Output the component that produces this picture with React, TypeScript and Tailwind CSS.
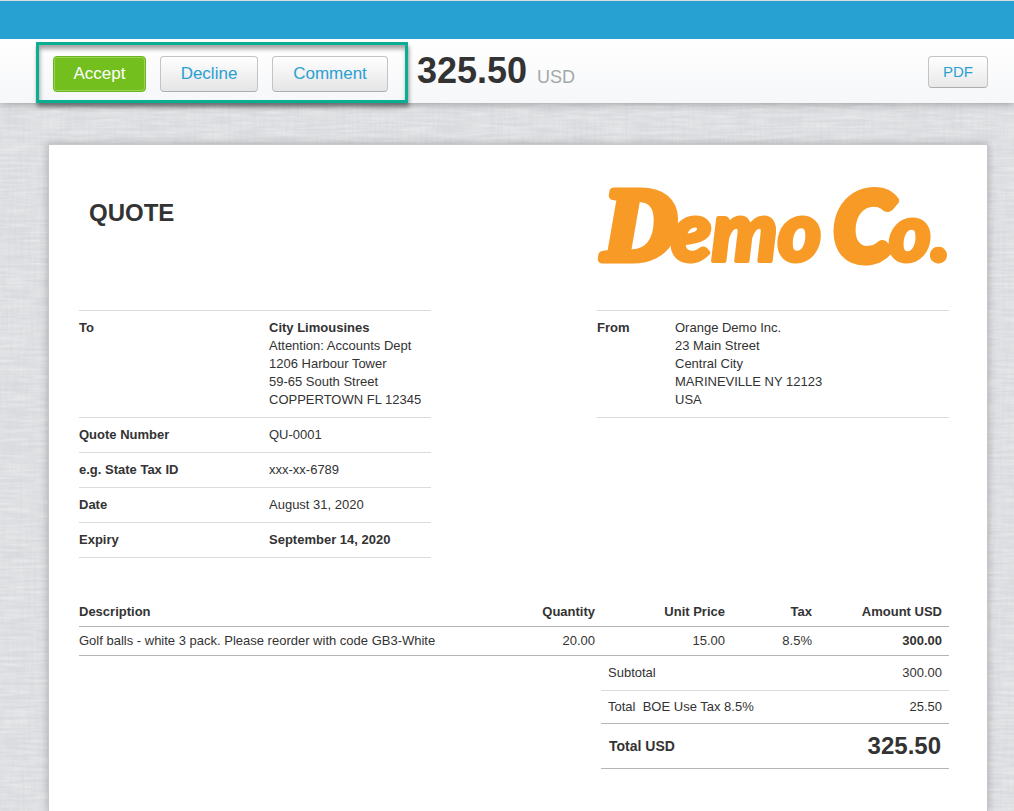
import type { ReactNode } from "react";

function LinenTexture() {
  return (
    <svg className="absolute inset-0 h-full w-full" aria-hidden="true">
      <defs>
        <filter id="weft" x="0" y="0" width="100%" height="100%">
          <feTurbulence type="fractalNoise" baseFrequency="0.03 0.35" numOctaves={2} seed={4} />
          <feColorMatrix values="0 0 0 0 1  0 0 0 0 1  0 0 0 0 1  0.7 0 0 0 -0.22" />
        </filter>
        <filter id="warp" x="0" y="0" width="100%" height="100%">
          <feTurbulence type="fractalNoise" baseFrequency="0.35 0.03" numOctaves={2} seed={9} />
          <feColorMatrix values="0 0 0 0 0.6  0 0 0 0 0.61  0 0 0 0 0.63  0.5 0 0 0 -0.2" />
        </filter>
      </defs>
      <rect width="100%" height="100%" filter="url(#weft)" />
      <rect width="100%" height="100%" filter="url(#warp)" />
    </svg>
  );
}

function Logo() {
  return (
    <svg className="h-[90px] w-[352px] overflow-visible" viewBox="0 0 352 90" role="img" aria-label="Demo Co.">
      <g
        className="fill-[#f89a26] stroke-[#f89a26] font-['Lato','Liberation_Sans',sans-serif] font-black italic"
        strokeLinejoin="round"
        strokeWidth="4"
      >
        <text
          x="6"
          y="78"
          fontSize="101"
          strokeWidth="9"
          className="font-['Liberation_Serif',serif] font-bold"
        >
          D
        </text>
        <text x="74" y="80" fontSize="83">emo</text>
        <text x="237" y="80" fontSize="95" strokeWidth="8">C</text>
        <text x="292" y="80" fontSize="80">o.</text>
      </g>
    </svg>
  );
}

const secondary =
  "h-9 rounded border border-[#c3c4c6] border-b-[#acaeb0] bg-linear-to-b from-white to-[#e5e5e5] text-[17px] text-[#2ba0d2]";

function DetailRow({ label, wide, children }: { label: string; wide?: boolean; children: ReactNode }) {
  return (
    <div className="flex border-b border-[#dbdbdb] py-2">
      <dt className={wide ? "w-[190px] shrink-0 font-bold" : "w-[78px] shrink-0 font-bold"}>{label}</dt>
      <dd>{children}</dd>
    </div>
  );
}

const items = [
  {
    description: "Golf balls - white 3 pack. Please reorder with code GB3-White",
    quantity: "20.00",
    price: "15.00",
    tax: "8.5%",
    amount: "300.00",
  },
];

export default function App() {
  return (
    <div className="relative flex min-h-screen flex-col bg-[#dadcdf] font-['Liberation_Sans',Arial,sans-serif] text-[13px] leading-[18px] text-[#333333]">
      <LinenTexture />

      <header className="relative">
        <div className="relative z-10 h-[39px] border-t border-[#d9dcde] bg-[#26a1d2]" />
        <div className="flex h-16 items-end bg-linear-to-b from-white to-[#f6f7f9] pr-[26px] pl-9 shadow-[0_1px_8px_rgba(0,0,0,0.3)]">
          <div className="flex h-[61px] gap-[14px] border-[3px] border-[#0aae92] pt-[11px] pr-[17px] pl-[14px] shadow-[1px_4px_4px_rgba(0,0,0,0.4),inset_1px_4px_4px_rgba(0,0,0,0.35)]">
            <button
              type="button"
              className="h-9 w-[93px] rounded border border-[#69b51c] bg-[#73bf1e] text-[17px] text-white shadow-[inset_0_0_0_1px_#9bd35b]"
            >
              Accept
            </button>
            <button type="button" className={`${secondary} w-[98px]`}>Decline</button>
            <button type="button" className={`${secondary} w-[116px]`}>Comment</button>
          </div>
          <p className="flex items-baseline gap-[10px] self-center pl-[9px]">
            <span className="text-4xl font-bold">325.50</span>
            <span className="text-lg text-[#a3a9a9]">USD</span>
          </p>
          <button
            type="button"
            className="mt-[17px] ml-auto h-8 w-[60px] self-start rounded border border-[#c3c4c6] border-b-[#acaeb0] bg-linear-to-b from-white to-[#e8e8e8] text-[15px] text-[#2ba0d2]"
          >
            PDF
          </button>
        </div>
      </header>

      <main className="relative mt-[41px] mr-[26px] ml-12 flex-1 border border-b-0 border-[#c6c7c9] bg-white pr-[38px] pb-10 pl-[30px] shadow-[0_0_8px_rgba(0,0,0,0.25)]">
        <div className="flex h-[165px] items-start justify-between">
          <h1 className="pt-[52px] pl-[10px] text-2xl leading-8 font-bold">QUOTE</h1>
          <div className="pt-9">
            <Logo />
          </div>
        </div>

        <div className="flex items-start justify-between">
          <dl className="w-[352px] border-t border-[#dbdbdb]">
            <DetailRow label="To" wide>
              <address className="not-italic">
                <strong>City Limousines</strong>
                <br />
                Attention: Accounts Dept
                <br />
                1206 Harbour Tower
                <br />
                59-65 South Street
                <br />
                COPPERTOWN FL 12345
              </address>
            </DetailRow>
            <DetailRow label="Quote Number" wide>QU-0001</DetailRow>
            <DetailRow label="e.g. State Tax ID" wide>xxx-xx-6789</DetailRow>
            <DetailRow label="Date" wide>August 31, 2020</DetailRow>
            <DetailRow label="Expiry" wide>
              <strong>September 14, 2020</strong>
            </DetailRow>
          </dl>
          <dl className="w-[352px] border-t border-[#dbdbdb]">
            <DetailRow label="From">
              <address className="not-italic">
                Orange Demo Inc.
                <br />
                23 Main Street
                <br />
                Central City
                <br />
                MARINEVILLE NY 12123
                <br />
                USA
              </address>
            </DetailRow>
          </dl>
        </div>

        <table className="mt-10 w-full table-fixed text-right">
          <thead>
            <tr className="border-b border-[#b3b4b8]">
              <th scope="col" className="py-[5px] text-left">Description</th>
              <th scope="col" className="w-[130px] py-[5px] pr-[7px]">Quantity</th>
              <th scope="col" className="w-[130px] py-[5px] pr-[7px]">Unit Price</th>
              <th scope="col" className="w-[87px] py-[5px] pr-[7px]">Tax</th>
              <th scope="col" className="w-[130px] py-[5px] pr-[7px]">Amount USD</th>
            </tr>
          </thead>
          <tbody>
            {items.map((item) => (
              <tr key={item.description} className="border-b border-[#b3b4b8]">
                <td className="py-[5px] text-left">{item.description}</td>
                <td className="py-[5px] pr-[7px]">{item.quantity}</td>
                <td className="py-[5px] pr-[7px]">{item.price}</td>
                <td className="py-[5px] pr-[7px]">{item.tax}</td>
                <td className="py-[5px] pr-[7px] font-bold">{item.amount}</td>
              </tr>
            ))}
          </tbody>
        </table>

        <table className="ml-auto w-[348px]">
          <tbody>
            <tr className="border-b border-[#dbdbdb]">
              <th scope="row" className="py-2 pl-[7px] text-left font-normal">Subtotal</th>
              <td className="py-2 pr-[7px] text-right">300.00</td>
            </tr>
            <tr className="border-b border-[#b3b4b8]">
              <th scope="row" className="py-[7px] pl-[7px] text-left font-normal">Total&nbsp; BOE Use Tax 8.5%</th>
              <td className="py-[7px] pr-[7px] text-right">25.50</td>
            </tr>
            <tr className="border-b border-[#b3b4b8] font-bold">
              <th scope="row" className="py-2 pl-2 text-left text-sm">Total USD</th>
              <td className="py-2 pr-2 text-right text-2xl leading-7">325.50</td>
            </tr>
          </tbody>
        </table>
      </main>
    </div>
  );
}
